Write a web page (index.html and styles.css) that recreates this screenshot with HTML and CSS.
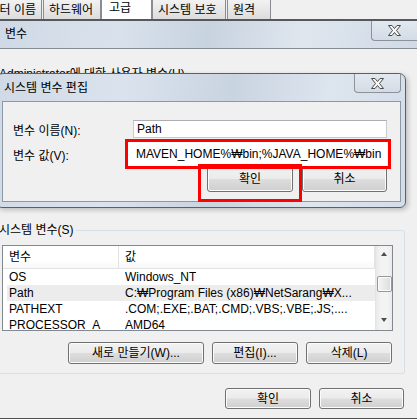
FILE: index.html
```html
<!DOCTYPE html>
<html lang="ko">
<head>
<meta charset="utf-8">
<title>변수</title>
<link rel="stylesheet" href="styles.css">
</head>
<body>
<div class="screen">
  <div class="tabs">
    <div class="tab tab-first">컴퓨터 이름</div>
    <div class="tab tab-hw">하드웨어</div>
    <div class="tab tab-active">고급</div>
    <div class="tab tab-sys">시스템 보호</div>
    <div class="tab tab-remote">원격</div>
  </div>

  <div class="window">
    <div class="titlebar">
      <span class="title">변수</span>
      <div class="close close-outer">
        <svg width="13" height="11" viewBox="0 0 13 11"><polygon points="0.5,0.5 4,0.5 6.5,3.5 9,0.5 12.5,0.5 8.5,5.5 12.5,10.5 9,10.5 6.5,7.5 4,10.5 0.5,10.5 4.5,5.5" fill="#f6f6f6" stroke="#4a4a4a" stroke-width="1" stroke-linejoin="round"/></svg>
      </div>
    </div>
    <div class="win-body">
      <div class="user-label">Administrator에 대한 사용자 변수(U)</div>
      <div class="user-box"></div>
      <fieldset class="group">
        <legend>시스템 변수(S)</legend>
        <div class="listview">
          <div class="lv-main">
            <div class="lv-header">
              <div class="h1">변수</div>
              <div class="h2">값</div>
            </div>
            <div class="lv-rows">
              <div class="lv-row"><div class="c1">OS</div><div class="c2">Windows_NT</div></div>
              <div class="lv-row lv-hover"><div class="c1">Path</div><div class="c2">C:₩Program Files (x86)₩NetSarang₩X...</div></div>
              <div class="lv-row"><div class="c1">PATHEXT</div><div class="c2">.COM;.EXE;.BAT;.CMD;.VBS;.VBE;.JS;....</div></div>
              <div class="lv-row"><div class="c1">PROCESSOR_A</div><div class="c2">AMD64</div></div>
            </div>
          </div>
          <div class="scrollbar">
            <div class="arrow arrow-up"></div>
            <div class="thumb"></div>
            <div class="arrow arrow-down"></div>
          </div>
        </div>
        <div class="btn-row">
          <button class="btn btn-new">새로 만들기(W)...</button>
          <button class="btn btn-86">편집(I)...</button>
          <button class="btn btn-86">삭제(L)</button>
        </div>
      </fieldset>
      <div class="dialog-buttons">
        <button class="btn btn-86 btn-tall">확인</button>
        <button class="btn btn-85 btn-tall">취소</button>
      </div>
      <div class="bottom-edge"></div>
    </div>
  </div>

  <div class="edit-dialog">
    <div class="edit-titlebar">
      <span class="title">시스템 변수 편집</span>
      <div class="close close-inner">
        <svg width="13" height="11" viewBox="0 0 13 11"><polygon points="0.5,0.5 4,0.5 6.5,3.5 9,0.5 12.5,0.5 8.5,5.5 12.5,10.5 9,10.5 6.5,7.5 4,10.5 0.5,10.5 4.5,5.5" fill="#f6f6f6" stroke="#4a4a4a" stroke-width="1" stroke-linejoin="round"/></svg>
      </div>
    </div>
    <div class="client">
      <div class="form-row">
        <label class="form-label">변수 이름(N):</label>
        <div class="textbox tb-name">Path</div>
      </div>
      <div class="form-row row-value">
        <label class="form-label">변수 값(V):</label>
        <div class="textbox tb-value"><span>MAVEN_HOME%₩bin;%JAVA_HOME%₩bin</span></div>
      </div>
      <div class="edit-buttons">
        <button class="btn btn-86 btn-big">확인</button>
        <button class="btn btn-85 btn-big">취소</button>
      </div>
    </div>
    <div class="mark mark-value"></div>
    <div class="mark mark-ok"></div>
  </div>
</div>
</body>
</html>
```

FILE: styles.css
```css
* { box-sizing: border-box; }

html, body {
  margin: 0;
  padding: 0;
}

body {
  background: #f0f0f0;
  font-family: "Liberation Sans", "Noto Sans CJK KR", sans-serif;
  font-size: 12px;
  color: #000;
}

.screen {
  position: relative;
  width: 417px;
  height: 419px;
  overflow: hidden;
  background: #f0f0f0;
}

/* ---------- tabs ---------- */
.tabs {
  display: flex;
  height: 19px;
  background: #f0f0f0;
}

.tab {
  height: 22px;
  margin-top: -3px;
  border: 1px solid #898c95;
  border-bottom: none;
  background: linear-gradient(#f4f4f4, #e6e6e6 60%, #dcdcdc);
  line-height: 25px;
  padding-left: 5px;
  white-space: nowrap;
  overflow: hidden;
}

.tab-first {
  width: 72px;
  margin-left: -30px;
  margin-right: 1px;
  text-align: right;
  padding-left: 0;
  padding-right: 5px;
}

.tab-hw { width: 58px; }

.tab-active {
  width: 51px;
  background: #fff;
  padding-left: 7px;
  line-height: 21px;
  margin-top: -3px;
  height: 22px;
}

.tab-sys { width: 74px; }

.tab-remote { width: 44px; margin-left: 1px; }

/* ---------- outer window ---------- */
.window {
  border-top: 2px solid #55595e;
}

.titlebar {
  display: flex;
  justify-content: space-between;
  align-items: flex-start;
  height: 28px;
  border-bottom: 1px solid #868c93;
  background: linear-gradient(100deg, #cfd9e5 0%, #d9e2ec 28%, #c8d3e0 50%, #dfe6ee 72%, #d0dae6 100%);
}

.title {
  line-height: 27px;
  padding-left: 5px;
}

.close {
  display: flex;
  align-items: center;
  justify-content: center;
  border: 1px solid #8c929a;
  border-top: none;
  border-radius: 0 0 4px 4px;
  background: linear-gradient(#e2e8ef, #d3dce6);
}

.close-outer {
  width: 46px;
  height: 20px;
  border-right: none;
  border-radius: 0 0 0 4px;
}

.win-body {
  display: flex;
  flex-direction: column;
}

.user-label {
  margin-top: 18px;
  line-height: 14px;
  margin-left: -1px;
  white-space: nowrap;
}

.user-box {
  height: 142px;
}

/* ---------- group box ---------- */
.group {
  margin: 0 12px 0 -6px;
  padding: 8px 11px 9px 7px;
  border: 1px solid #d5dfe5;
  border-radius: 3px;
  min-width: 0;
}

.group legend {
  padding: 0 2px 0 1px;
  margin-left: -4px;
  line-height: 14px;
}

.listview {
  display: flex;
  height: 86px;
  border: 1px solid #828790;
  background: #fff;
}

.lv-main {
  flex: 1;
  overflow: hidden;
}

.lv-header {
  display: flex;
  height: 23px;
  padding-left: 6px;
  border-bottom: 1px solid #e2e2e2;
  border-right: 1px solid #e2e2e2;
  line-height: 22px;
  background: linear-gradient(#ffffff, #ffffff 60%, #f7f8f9);
}

.h1 {
  width: 110px;
  border-right: 1px solid #e2e2e2;
}

.h2 { padding-left: 6px; }

.lv-rows {
  padding-left: 4px;
}

.lv-row {
  display: flex;
  height: 16px;
  line-height: 16px;
  padding-left: 2px;
  white-space: nowrap;
}

.lv-hover { background: #ececec; }

.c1 { width: 116px; flex: none; overflow: hidden; }
.c2 { overflow: hidden; }

.scrollbar {
  width: 17px;
  flex: none;
  display: flex;
  flex-direction: column;
  align-items: center;
  background: linear-gradient(90deg, #e9e9e9, #f3f3f3 30%, #f3f3f3 70%, #ebebeb);
  border-left: 1px solid #e4e4e4;
}

.arrow {
  width: 0;
  height: 0;
  border-left: 3.5px solid transparent;
  border-right: 3.5px solid transparent;
}

.arrow-up {
  margin-top: 6px;
  border-bottom: 4px solid #4d4d4d;
}

.arrow-down {
  margin-top: 26px;
  border-top: 4px solid #4d4d4d;
}

.thumb {
  margin-top: 20px;
  width: 15px;
  height: 16px;
  border: 1px solid #979797;
  border-radius: 2px;
  background: linear-gradient(90deg, #f4f4f4, #e9e9e9 50%, #dcdcdc);
  box-shadow: inset 0 0 0 1px #fbfbfb;
}

/* ---------- buttons ---------- */
.btn {
  font: inherit;
  color: #000;
  height: 22px;
  padding: 0;
  border: 1px solid #707070;
  border-radius: 3px;
  background: linear-gradient(#f2f2f2 0%, #ebebeb 48%, #dddddd 52%, #cfcfcf 100%);
  box-shadow: inset 0 0 0 1px #fbfbfb;
  line-height: 20px;
}

.btn-row {
  display: flex;
  justify-content: flex-end;
  gap: 8px;
  margin-top: 11px;
  padding-right: 1px;
}

.btn-new { width: 136px; }
.btn-86 { width: 86px; }
.btn-85 { width: 85px; }
.btn-tall { height: 21px; }
.btn-big { height: 26px; }

.dialog-buttons {
  display: flex;
  justify-content: flex-end;
  gap: 8px;
  margin-top: 14px;
  padding-right: 13px;
}

.bottom-edge {
  margin-top: 9px;
  height: 1px;
  background: #505050;
}

/* ---------- edit dialog (on top) ---------- */
.edit-dialog {
  position: absolute;
  top: 73px;
  left: -4px;
  width: 410px;
  border: 1px solid #58616b;
  border-radius: 7px 7px 6px 6px;
  background: linear-gradient(100deg, #d0dae6 0%, #dae3ed 30%, #c9d4e1 55%, #dde5ee 78%, #d3dde8 100%);
  padding: 0 4px 5px 5px;
  box-shadow: 2px 2px 5px rgba(0, 0, 0, 0.22);
}

.edit-titlebar {
  display: flex;
  justify-content: space-between;
  align-items: flex-start;
  height: 27px;
  margin-left: -5px;
  margin-right: -4px;
}

.edit-titlebar .title {
  padding-left: 7px;
  line-height: 28px;
}

.close-inner {
  width: 47px;
  height: 19px;
  margin-right: 4px;
}

.client {
  height: 101px;
  border: 1px solid #8d98a5;
  background: #f0f0f0;
  padding: 18px 13px 0 10px;
}

.form-row {
  display: flex;
  align-items: center;
  justify-content: space-between;
}

.form-label {
  white-space: nowrap;
}

.textbox {
  background: #fff;
  white-space: nowrap;
  overflow: hidden;
}

.tb-name {
  width: 254px;
  height: 18px;
  line-height: 16px;
  border: 1px solid #c5cad2;
  border-top-color: #abadb3;
  padding-left: 3px;
}

.row-value {
  margin-top: 4px;
}

.tb-value {
  width: 260px;
  height: 24px;
  line-height: 24px;
  padding-left: 9px;
}

.edit-buttons {
  display: flex;
  justify-content: flex-end;
  gap: 9px;
}

/* red annotation boxes drawn over the dialog */
.mark {
  position: absolute;
  border: 3px solid #ff0000;
}

.mark-value {
  left: 128px;
  top: 65px;
  width: 266px;
  height: 30px;
}

.mark-ok {
  left: 201px;
  top: 90px;
  width: 104px;
  height: 38px;
}
```
